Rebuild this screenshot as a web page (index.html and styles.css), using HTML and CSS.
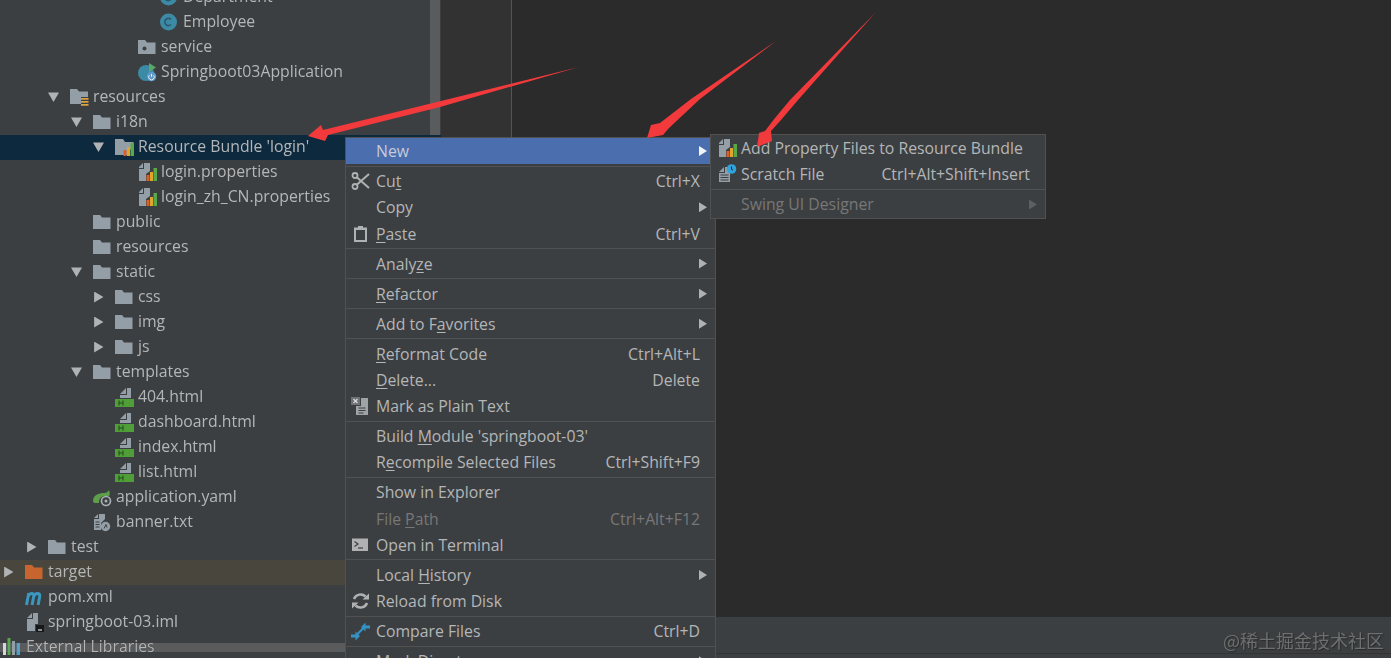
FILE: index.html
```html
<!DOCTYPE html>
<html lang="en">
<head>
<meta charset="utf-8">
<title>Project tree context menu</title>
<link rel="stylesheet" href="styles.css">
</head>
<body>
<svg class="defs" width="0" height="0" aria-hidden="true">
  <defs>
    <symbol id="folder" viewBox="0 0 19 20"><path d="M0 3h7l2 2.500h8.500V17H0z" fill="#939ea6"/></symbol>
    <symbol id="pkg" viewBox="0 0 19 20"><path d="M0 3h7l2 2.500h8.500V17H0z" fill="#939ea6"/><circle cx="6.500" cy="11.500" r="2" fill="#3c3f41"/></symbol>
    <symbol id="res" viewBox="0 0 19 20"><path d="M0 2h7l2 2.500h9V10h-7v7H0z" fill="#939ea6"/><path d="M11 11h7.500v1.700H11zM11 14h7.500v1.700H11zM11 17h7.500v1.700H11z" fill="#d9a343"/></symbol>
    <symbol id="orange" viewBox="0 0 19 20"><path d="M0 3h7l2 2.500h8.500V17H0z" fill="#c8652e"/></symbol>
    <symbol id="cls" viewBox="0 0 19 20"><circle cx="8.500" cy="10" r="8.500" fill="#3d8aa6"/><path d="M11 7.500a3.600 3.600 0 1 0 0 5" fill="none" stroke="#2a5a6e" stroke-width="1.600"/></symbol>
    <symbol id="app" viewBox="0 0 19 20"><circle cx="8" cy="11" r="8" fill="#3d8aa6"/><path d="M11 1l7 4.500-7 4.500z" fill="#59a869"/><circle cx="13.500" cy="14.500" r="4.800" fill="#5d98c6"/><path d="M13.500 11.800v3M11.300 13.300a2.800 2.800 0 1 0 4.400 0" fill="none" stroke="#e3edf5" stroke-width="1"/></symbol>
    <symbol id="bundle" viewBox="0 0 19 20"><path d="M0 2h8l2 3h8.500v3l-6.500 10H0z" fill="#939ea6"/><path d="M8.500 13h3v6h-3z" fill="#d9622b"/><path d="M12 10h3v9h-3z" fill="#e0a52e"/><path d="M15.500 6h3.500v13h-3.500z" fill="#59a84a"/></symbol>
    <symbol id="props" viewBox="0 0 19 20"><path d="M1 5l4-4v5H1zM6 1h6v8l-4 3v7H1V7h5z" fill="#939ea6"/><path d="M8.500 13h3v6h-3z" fill="#d9622b"/><path d="M12 10h3v9h-3z" fill="#e0a52e"/><path d="M15.500 6h3.500v13h-3.500z" fill="#59a84a"/></symbol>
    <symbol id="html" viewBox="0 0 19 20"><path d="M5 7l6-6v6zM12 1h4v10H5V8h7z" fill="#939ea6"/><path d="M0 12h19v8H0z" fill="#4f9e38"/><path d="M4 13.500v5M8 13.500v5M4 16h4" stroke="#234f1a" stroke-width="1.100" fill="none"/></symbol>
    <symbol id="yaml" viewBox="0 0 19 20"><path d="M0 14C0 8 6 6 11 6c2 0 4-1 5-3 1 3 1 5 0 6h-4a6 6 0 0 0-6 7H2c-1 0-2-1-2-2z" fill="#5c9e4a"/><circle cx="13" cy="14" r="4.500" fill="none" stroke="#a9b1b6" stroke-width="1.700"/><circle cx="13" cy="14" r="1.500" fill="#a9b1b6"/></symbol>
    <symbol id="txt" viewBox="0 0 19 20"><path d="M1 6l4-4v4zM6 2h6v5l-4 4v7H1V7h5z" fill="#939ea6"/><path d="M2.500 10h4M2.500 12.500h4M2.500 15h4" stroke="#3c3f41"/><circle cx="12.500" cy="14.500" r="4.700" fill="#939ea6"/><path d="M11 16.500l2-4 1 3" stroke="#3c3f41" fill="none"/></symbol>
    <symbol id="pom" viewBox="0 0 19 20"><path d="M1.500 18L3.800 6M3.300 9c2-3.500 5.500-3.500 5.500 0l-1.700 9M8.800 9c2-3.500 6-3.500 6 0l-1.700 9" fill="none" stroke="#3a97bd" stroke-width="3"/></symbol>
    <symbol id="iml" viewBox="0 0 19 20"><path d="M2 6l5-5v5zM8 1h5v11h-3v7H2V7h6z" fill="#939ea6"/><path d="M11 13h8v7h-8z" fill="#16181a"/><path d="M13 18h4" stroke="#ddd" stroke-width="1.200"/></symbol>
    <symbol id="libs" viewBox="0 0 19 20"><path d="M0 6h3v12H0z" fill="#d5d8d6"/><path d="M4.500 1h3v17h-3z" fill="#59a84a"/><path d="M9 4h3v14H9z" fill="#939ea6"/><path d="M13.500 6h3.500v12h-3.500z" fill="#4aa0c4"/></symbol>
    <symbol id="scissors" viewBox="0 0 19 20"><circle cx="4" cy="4.500" r="2.500" fill="none" stroke="#afb1b3" stroke-width="1.800"/><circle cx="4" cy="15.500" r="2.500" fill="none" stroke="#afb1b3" stroke-width="1.800"/><path d="M5.500 6l12.500 11M5.500 14L18 3" stroke="#afb1b3" stroke-width="2" fill="none"/></symbol>
    <symbol id="paste" viewBox="0 0 19 20"><path d="M3 3.500h4V2h5v1.500h4V18H3z" fill="#afb1b3"/><path d="M5 6h9v10H5z" fill="#3c3f41"/></symbol>
    <symbol id="plain" viewBox="0 0 19 20"><path d="M0 1h9v8H0z" fill="#6e7072"/><path d="M2.500 3l4 4M6.500 3l-4 4" stroke="#ddd" stroke-width="1.200"/><path d="M10 2h7v17H5v-9h5z" fill="#9ea3a6"/><path d="M7.500 12h7M7.500 14.500h7M7.500 17h5" stroke="#3c3f41"/></symbol>
    <symbol id="term" viewBox="0 0 19 20"><path d="M1 3.500h16V16H1z" fill="#afb1b3"/><path d="M3.500 6.500l3.500 2.500-3.500 2.500" fill="none" stroke="#3c3f41" stroke-width="1.200"/><path d="M7 13h5" stroke="#3c3f41" stroke-width="1.200"/></symbol>
    <symbol id="reload" viewBox="0 0 19 20"><path d="M3 8A7 7 0 0 1 14.500 5.500M16 12A7 7 0 0 1 4.500 14.500" fill="none" stroke="#afb1b3" stroke-width="2.500"/><path d="M11.500 8.500h6.500V2.500zM7.500 11.500H1v6z" fill="#afb1b3"/></symbol>
    <symbol id="compare" viewBox="0 0 19 20"><path d="M10 6l4.500-4.500v3H19v3h-4.500v3z" fill="#3592c4"/><path d="M9 15l-4.500 4.500v-3H0v-3h4.500v-3z" fill="#3592c4"/><path d="M6 13.500l7-7" stroke="#3592c4" stroke-width="2.200"/></symbol>
    <symbol id="scratch" viewBox="0 0 19 20"><path d="M1 8l5-5v5zM7 3h5v15H1V9h6z" fill="#939ea6"/><path d="M2.500 11h8M2.500 13.500h8M2.500 16h8" stroke="#3c3f41"/><circle cx="13.500" cy="5" r="4.800" fill="#2fa3dc"/><path d="M13.500 2.500v2.700l1.500 1" fill="none" stroke="#123" stroke-width="1"/></symbol>
  </defs>
</svg>

<div class="ide">
  <aside class="sidebar">
    <ul class="tree">
      <li class="row l7"><svg class="ic"><use href="#cls"/></svg><span>Department</span></li>
      <li class="row l7"><svg class="ic"><use href="#cls"/></svg><span>Employee</span></li>
      <li class="row l6"><svg class="ic"><use href="#pkg"/></svg><span>service</span></li>
      <li class="row l6"><svg class="ic"><use href="#app"/></svg><span>Springboot03Application</span></li>
      <li class="row l3"><i class="tw down"></i><svg class="ic"><use href="#res"/></svg><span>resources</span></li>
      <li class="row l4"><i class="tw down"></i><svg class="ic"><use href="#folder"/></svg><span>i18n</span></li>
      <li class="row l5 selected"><i class="tw down"></i><svg class="ic"><use href="#bundle"/></svg><span>Resource Bundle 'login'</span></li>
      <li class="row l6"><svg class="ic"><use href="#props"/></svg><span>login.properties</span></li>
      <li class="row l6"><svg class="ic"><use href="#props"/></svg><span>login_zh_CN.properties</span></li>
      <li class="row l4"><svg class="ic"><use href="#folder"/></svg><span>public</span></li>
      <li class="row l4"><svg class="ic"><use href="#folder"/></svg><span>resources</span></li>
      <li class="row l4"><i class="tw down"></i><svg class="ic"><use href="#folder"/></svg><span>static</span></li>
      <li class="row l5"><i class="tw right"></i><svg class="ic"><use href="#folder"/></svg><span>css</span></li>
      <li class="row l5"><i class="tw right"></i><svg class="ic"><use href="#folder"/></svg><span>img</span></li>
      <li class="row l5"><i class="tw right"></i><svg class="ic"><use href="#folder"/></svg><span>js</span></li>
      <li class="row l4"><i class="tw down"></i><svg class="ic"><use href="#folder"/></svg><span>templates</span></li>
      <li class="row l5"><svg class="ic"><use href="#html"/></svg><span>404.html</span></li>
      <li class="row l5"><svg class="ic"><use href="#html"/></svg><span>dashboard.html</span></li>
      <li class="row l5"><svg class="ic"><use href="#html"/></svg><span>index.html</span></li>
      <li class="row l5"><svg class="ic"><use href="#html"/></svg><span>list.html</span></li>
      <li class="row l4"><svg class="ic"><use href="#yaml"/></svg><span>application.yaml</span></li>
      <li class="row l4"><svg class="ic"><use href="#txt"/></svg><span>banner.txt</span></li>
      <li class="row l2"><i class="tw right"></i><svg class="ic"><use href="#folder"/></svg><span>test</span></li>
      <li class="row l1 excluded"><i class="tw right"></i><svg class="ic"><use href="#orange"/></svg><span>target</span></li>
      <li class="row l1"><svg class="ic"><use href="#pom"/></svg><span>pom.xml</span></li>
      <li class="row l1"><svg class="ic"><use href="#iml"/></svg><span>springboot-03.iml</span></li>
      <li class="row l0"><svg class="ic"><use href="#libs"/></svg><span>External Libraries</span></li>
    </ul>
    <div class="vscroll"></div>
    <div class="hscroll"></div>
  </aside>

  <main class="workspace">
    <div class="editor">
      <div class="gutter"></div>
      <div class="code"></div>
    </div>
    <div class="toolstrip"><div class="statusbar"></div></div>
  </main>

  <nav class="menu main-menu">
    <div class="item active"><span class="slot"></span><span class="label">New</span><i class="sub lit"></i></div>
    <hr>
    <div class="item"><span class="slot"><svg class="ic"><use href="#scissors"/></svg></span><span class="label">Cu<u>t</u></span><span class="keys">Ctrl+X</span></div>
    <div class="item"><span class="slot"></span><span class="label">Copy</span><i class="sub"></i></div>
    <div class="item"><span class="slot"><svg class="ic"><use href="#paste"/></svg></span><span class="label"><u>P</u>aste</span><span class="keys">Ctrl+V</span></div>
    <hr>
    <div class="item"><span class="slot"></span><span class="label">Analy<u>z</u>e</span><i class="sub"></i></div>
    <hr>
    <div class="item"><span class="slot"></span><span class="label"><u>R</u>efactor</span><i class="sub"></i></div>
    <hr>
    <div class="item"><span class="slot"></span><span class="label">Add to F<u>a</u>vorites</span><i class="sub"></i></div>
    <hr>
    <div class="item"><span class="slot"></span><span class="label"><u>R</u>eformat Code</span><span class="keys">Ctrl+Alt+L</span></div>
    <div class="item"><span class="slot"></span><span class="label"><u>D</u>elete...</span><span class="keys">Delete</span></div>
    <div class="item"><span class="slot"><svg class="ic"><use href="#plain"/></svg></span><span class="label">Mark as Plain Text</span></div>
    <hr>
    <div class="item"><span class="slot"></span><span class="label">Build <u>M</u>odule 'springboot-03'</span></div>
    <div class="item"><span class="slot"></span><span class="label">R<u>e</u>compile Selected Files</span><span class="keys">Ctrl+Shift+F9</span></div>
    <hr>
    <div class="item"><span class="slot"></span><span class="label">Show in Explorer</span></div>
    <div class="item disabled"><span class="slot"></span><span class="label">File <u>P</u>ath</span><span class="keys">Ctrl+Alt+F12</span></div>
    <div class="item"><span class="slot"><svg class="ic"><use href="#term"/></svg></span><span class="label">Open in Terminal</span></div>
    <hr>
    <div class="item"><span class="slot"></span><span class="label">Local <u>H</u>istory</span><i class="sub"></i></div>
    <div class="item"><span class="slot"><svg class="ic"><use href="#reload"/></svg></span><span class="label">Reload from Disk</span></div>
    <hr>
    <div class="item"><span class="slot"><svg class="ic"><use href="#compare"/></svg></span><span class="label">Compare Files</span><span class="keys">Ctrl+D</span></div>
    <hr>
    <div class="item"><span class="slot"></span><span class="label">Mark Directory as</span><i class="sub"></i></div>
  </nav>

  <nav class="menu sub-menu">
    <div class="item"><span class="slot"><svg class="ic"><use href="#props"/></svg></span><span class="label">Add Property Files to Resource Bundle</span></div>
    <div class="item"><span class="slot"><svg class="ic"><use href="#scratch"/></svg></span><span class="label">Scratch File</span><span class="keys">Ctrl+Alt+Shift+Insert</span></div>
    <hr>
    <div class="item disabled"><span class="slot"></span><span class="label">Swing UI Designer</span><i class="sub"></i></div>
  </nav>

  <svg class="arrows" viewBox="0 0 1391 658" aria-hidden="true">
    <path d="M579 67L323 130L321 125L308 136L325 141L328 135L440 107Z"/>
    <path d="M776 41L691 99L660 123L651 125L647 138L663 135L669 128L700 99Z"/>
    <path d="M876 12L790 100L775 118L765 131L759 133L757 147L772 141L771 131L781 120L798 100Z"/>
  </svg>

  <div class="watermark">@稀土掘金技术社区</div>
</div>
</body>
</html>
```

FILE: styles.css
```css
* { box-sizing: border-box; }
html, body { margin: 0; padding: 0; height: 100%; }
body {
  background: #2b2b2b;
  color: #b4b6b8;
  font-family: "Open Sans", "Noto Sans", sans-serif;
  font-size: 15.8px;
  overflow: hidden;
}
.defs { position: absolute; }
.ide {
  position: relative;
  display: flex;
  width: 1391px;
  height: 658px;
  overflow: hidden;
  filter: blur(0.35px);
}

/* project tree */
.sidebar {
  position: relative;
  flex: 0 0 441px;
  background: #3c3f41;
  overflow: hidden;
}
.tree {
  list-style: none;
  margin: -15.5px 0 0;
  padding: 0;
}
.row {
  display: flex;
  align-items: center;
  height: 25px;
  white-space: nowrap;
}
.row span { position: relative; top: -1px; }
.row .ic { margin-right: 4px; }
.l0 { padding-left: 3px; }
.l1 { padding-left: 25px; }
.l2 { padding-left: 48px; }
.l3 { padding-left: 70px; }
.l4 { padding-left: 93px; }
.l5 { padding-left: 115px; }
.l6 { padding-left: 138px; }
.l7 { padding-left: 160px; }
.selected { background: #0d293e; }
.excluded { background: #49463e; }
.tw {
  flex: 0 0 11px;
  width: 11px;
  height: 11px;
  margin-left: -22px;
  margin-right: 11px;
  background: #b0b2b4;
}
.tw.down { clip-path: polygon(0 10%, 100% 10%, 50% 95%); }
.tw.right { clip-path: polygon(10% 0, 95% 50%, 10% 100%); }
.ic { flex: 0 0 19px; width: 19px; height: 20px; }

.vscroll {
  position: absolute;
  left: 430px;
  top: 0;
  width: 10px;
  height: 135px;
  background: #595b5d;
}
.hscroll {
  position: absolute;
  left: 0;
  right: 96px;
  top: 643px;
  height: 9px;
  background: #595b5d;
  mix-blend-mode: lighten;
}

/* editor */
.workspace {
  flex: 1;
  display: flex;
  flex-direction: column;
}
.editor { flex: 1; display: flex; }
.gutter {
  flex: 0 0 71px;
  background: #323232;
  border-right: 1px solid #555;
}
.code { flex: 1; background: #2b2b2b; }
.toolstrip {
  flex: 0 0 41px;
  display: flex;
  flex-direction: column;
  justify-content: flex-end;
  background: #3c3f41;
}
.statusbar {
  height: 5px;
  background: #3c3f41;
  border-top: 1px solid #333;
}

/* menus */
.menu {
  position: absolute;
  background: #3c3f41;
  border: 1px solid #515151;
  font-size: 15.8px;
}
.main-menu { left: 345px; top: 137px; width: 371px; border-bottom: 0; }
.sub-menu { left: 710px; top: 134px; width: 336px; height: 85px; }
.item {
  display: flex;
  align-items: center;
  height: 26.2px;
  white-space: nowrap;
}
.slot {
  flex: 0 0 30px;
  display: flex;
  justify-content: center;
  padding-left: 2px;
  padding-right: 3px;
}
.sub-menu .slot { padding-left: 6px; padding-right: 4px; }
.label { flex: 1; }
.keys { padding-right: 15px; }
.sub {
  flex: 0 0 8px;
  width: 8px;
  height: 10px;
  margin-right: 8px;
  background: #afb1b3;
  clip-path: polygon(0 0, 100% 50%, 0 100%);
}
.sub.lit { background: #f2f4f7; }
.active { background: #4b6eaf; }
.active .label { color: #c5cbd8; }
.disabled .label, .disabled .keys { color: #777; }
.disabled .sub { background: #5d5f61; }
u { text-underline-offset: 2px; text-decoration-thickness: 1px; }
hr {
  height: 1px;
  margin: 1.450px 0;
  border: 0;
  background: #515151;
}
.sub-menu hr { margin: 1.500px 0; }
.sub-menu .keys { padding-right: 15px; }

/* annotations */
.arrows {
  position: absolute;
  left: 0;
  top: 0;
  width: 1391px;
  height: 658px;
  pointer-events: none;
}
.arrows path { fill: #f23a3c; }
.watermark {
  position: absolute;
  right: 7px;
  top: 627px;
  color: #6d6f70;
  font-family: "Noto Sans CJK SC", "Noto Sans", sans-serif;
  font-size: 18px;
  line-height: 26px;
  text-shadow: 1px 1px 1px #2a2a2a;
}
```
